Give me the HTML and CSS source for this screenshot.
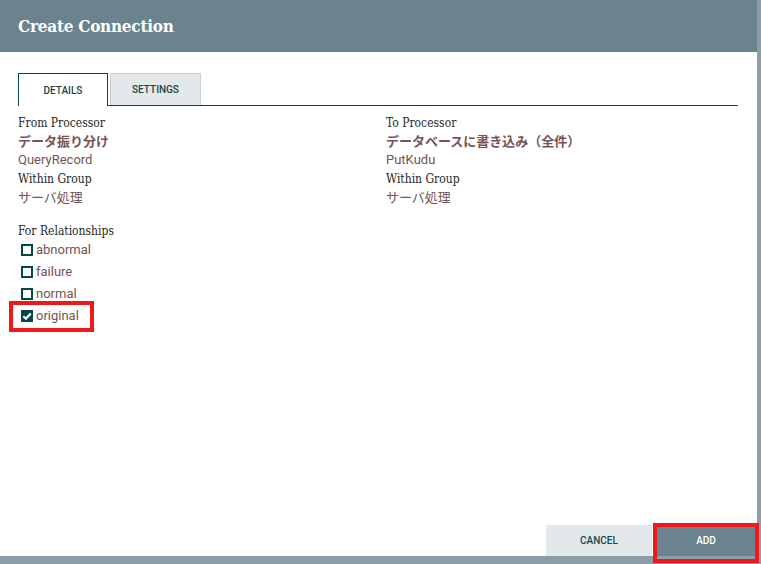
FILE: index.html
```html
<!DOCTYPE html>
<html lang="ja">
<head>
<meta charset="utf-8">
<title>Create Connection</title>
<link rel="stylesheet" href="styles.css">
</head>
<body>
<div class="dialog">
  <div class="dialog-header">Create Connection</div>
  <div class="dialog-body">
    <div class="tabs">
      <div class="tab tab-active">DETAILS</div>
      <div class="tab">SETTINGS</div>
    </div>
    <div class="details">
      <div class="col">
        <div class="label">From Processor</div>
        <div class="value value-name">データ振り分け</div>
        <div class="value">QueryRecord</div>
        <div class="label label-group">Within Group</div>
        <div class="value">サーバ処理</div>
      </div>
      <div class="col">
        <div class="label">To Processor</div>
        <div class="value value-name">データベースに書き込み（全件）</div>
        <div class="value">PutKudu</div>
        <div class="label label-group">Within Group</div>
        <div class="value">サーバ処理</div>
      </div>
    </div>
    <div class="label rel-label">For Relationships</div>
    <div class="rels">
      <div class="rel"><span class="cb"></span><span class="rel-name">abnormal</span></div>
      <div class="rel"><span class="cb"></span><span class="rel-name">failure</span></div>
      <div class="rel"><span class="cb"></span><span class="rel-name">normal</span></div>
      <div class="rel"><span class="cb cb-checked"><svg viewBox="0 0 12 12" width="12" height="12"><path d="M2.3 6.2 L4.9 8.6 L9.8 3.4" fill="none" stroke="#fff" stroke-width="2.2"/></svg></span><span class="rel-name">original</span></div>
    </div>
  </div>
  <div class="dialog-footer">
    <div class="btn btn-cancel">CANCEL</div>
    <div class="btn btn-add">ADD</div>
  </div>
  <div class="mark mark-original"></div>
  <div class="mark mark-add"></div>
</div>
</body>
</html>
```

FILE: styles.css
```css
html, body {
  margin: 0;
  padding: 0;
}
body {
  width: 761px;
  height: 564px;
  background: #8d9ea8;
  overflow: hidden;
  font-family: Roboto, "Noto Sans CJK JP", sans-serif;
}
.dialog {
  position: relative;
  width: 757px;
  height: 556px;
  background: #fff;
  display: flex;
  flex-direction: column;
}
.dialog-header {
  height: 52px;
  flex: none;
  background: #6b838e;
  color: #fff;
  font-family: "DejaVu Serif Condensed", "DejaVu Serif", serif;
  font-weight: bold;
  font-size: 17px;
  letter-spacing: -0.25px;
  line-height: 52px;
  padding-left: 18px;
}
.dialog-body {
  flex: 1;
  padding: 21px 19px 0 18px;
}
.tabs {
  display: flex;
  gap: 2px;
  height: 32px;
  border-bottom: 1px solid #004849;
}
.tab {
  box-sizing: border-box;
  height: 32px;
  width: 91px;
  display: flex;
  align-items: center;
  justify-content: center;
  font-size: 10px;
  font-weight: 500;
  color: #17474a;
  background: #e3e8eb;
  border: 1px solid #c7d2d7;
  border-bottom: none;
}
.tab-active {
  width: 90px;
  background: #fff;
  border: 1px solid #004849;
  border-bottom: none;
  height: 33px;
  margin-bottom: -1px;
}
.details {
  display: grid;
  grid-template-columns: 368px 1fr;
  padding-top: 8px;
}
.label {
  font-family: "DejaVu Serif Condensed", "DejaVu Serif", "Noto Sans CJK JP", serif;
  font-size: 12px;
  color: #262626;
  line-height: 19px;
}
.label-group {
  line-height: 20px;
}
.value {
  font-size: 13px;
  color: #775351;
  line-height: 18px;
}
.value-name {
  font-weight: bold;
}
.rel-label {
  margin-top: 16px;
  line-height: 16px;
}
.rels {
  display: flex;
  flex-direction: column;
}
.rel {
  height: 22px;
  display: flex;
  align-items: center;
  gap: 3px;
  padding-left: 3px;
}
.cb {
  box-sizing: border-box;
  width: 12px;
  height: 12px;
  border: 2px solid #004849;
  display: flex;
  align-items: center;
  justify-content: center;
}
.cb-checked {
  background: #004849;
  border: none;
}
.cb svg {
  display: block;
}
.rel-name {
  font-size: 13px;
  color: #775351;
  line-height: 16px;
}
.dialog-footer {
  flex: none;
  display: flex;
  justify-content: flex-end;
  gap: 3px;
  height: 31px;
}
.btn {
  height: 31px;
  display: flex;
  align-items: center;
  justify-content: center;
  font-size: 10px;
  font-weight: 500;
}
.btn-cancel {
  width: 106px;
  background: #e3e8eb;
  color: #17474a;
}
.btn-add {
  width: 102px;
  background: #6b838e;
  color: #fff;
}
.mark {
  position: absolute;
  box-sizing: border-box;
  border: 4px solid #f01919;
}
.mark-original {
  left: 9px;
  top: 301px;
  width: 85px;
  height: 31px;
}
.mark-add {
  left: 653px;
  top: 523px;
  width: 106px;
  height: 40px;
}
```
